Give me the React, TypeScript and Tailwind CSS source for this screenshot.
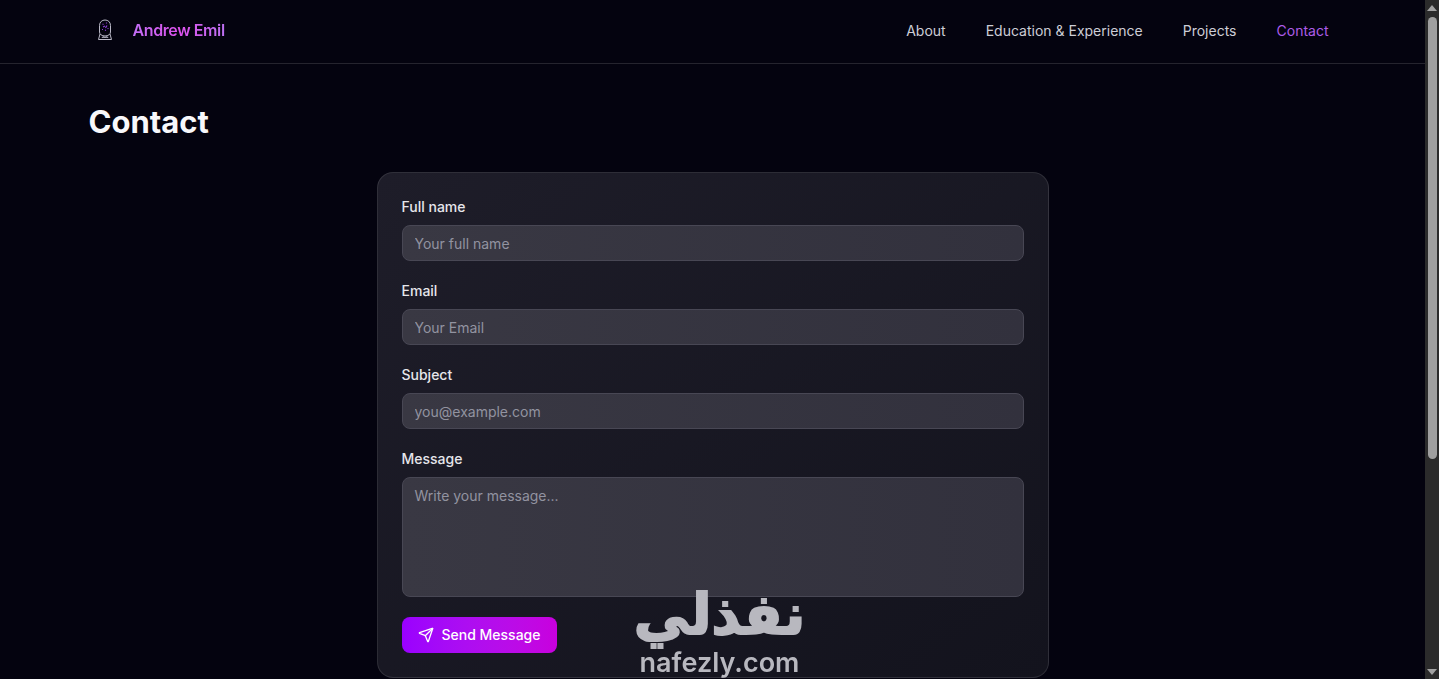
import type { ReactNode } from 'react';
import { Send } from 'lucide-react';

const NAV_LINKS = [
  { label: 'About', href: '#about' },
  { label: 'Education & Experience', href: '#education' },
  { label: 'Projects', href: '#projects' },
  { label: 'Contact', href: '#contact', active: true },
];

const FIELDS = [
  { id: 'name', label: 'Full name', type: 'text', placeholder: 'Your full name' },
  { id: 'email', label: 'Email', type: 'email', placeholder: 'Your Email' },
  { id: 'subject', label: 'Subject', type: 'text', placeholder: 'you@example.com' },
];

const inputStyles =
  'block w-full rounded-lg border border-[#484754] bg-linear-to-r from-[#393843] to-[#32313d] px-3 text-sm text-white placeholder:text-[#9293a0] outline-none focus:border-purple-500';

const LogoMark = () => (
  <svg viewBox="0 0 16 22" className="h-[22px] w-4" fill="none" stroke="#b9b8c6" strokeWidth="1" strokeLinejoin="round">
    <path d="M2.500 13V6.500C2.500 3 5 1 8 1s5.500 2 5.500 5.500V13c0 2.500-2.500 4-5.500 4s-5.500-1.500-5.500-4Z" />
    <path d="M3 15 1.500 20.500h13L13 15" />
    <path d="M5 18.500c1-1.500 2-1.500 3 0 1-1.500 2-1.500 3 0M5 18.500h6" strokeWidth=".8" />
    <path d="M5.500 5l1 .5M9.500 3.500v1M6 8l2-1M10 6.500 8.500 9M5 10.500h1M8 11l1 .5M10.500 9.500h1" stroke="#8b3fd6" strokeWidth="1.200" />
  </svg>
);

const Header = () => (
  <header className="border-b border-white/13">
    <div className="mx-auto flex h-[63px] max-w-7xl items-center justify-between px-4">
      <a href="#home" className="flex items-center gap-5 pl-2 pb-1">
        <LogoMark />
        <span className="bg-linear-to-r from-[#c26ef5] via-[#dc50ec] to-[#bd70f2] bg-clip-text text-base font-semibold tracking-tight text-transparent">
          Andrew Emil
        </span>
      </a>
      <nav className="flex gap-10 pr-2 pb-0.5">
        {NAV_LINKS.map((link) => (
          <a key={link.label} href={link.href} className={link.active ? 'text-sm text-[#ad5ce8]' : 'text-sm text-[#cdcdd6] hover:text-white'}>
            {link.label}
          </a>
        ))}
      </nav>
    </div>
  </header>
);

const Field = ({ id, label, children }: { id: string; label: string; children: ReactNode }) => (
  <div>
    <label htmlFor={id} className="mb-2 block text-sm font-medium text-[#e6e6ec]">
      {label}
    </label>
    {children}
  </div>
);

const ContactForm = () => (
  <form className="mx-auto w-full max-w-2xl space-y-5 rounded-2xl border border-white/10 bg-linear-to-br from-[#1e1d29] to-[#13131d] p-6">
    {FIELDS.map((field) => (
      <Field key={field.id} id={field.id} label={field.label}>
        <input id={field.id} type={field.type} placeholder={field.placeholder} className={`${inputStyles} h-9`} />
      </Field>
    ))}
    <Field id="message" label="Message">
      <textarea id="message" placeholder="Write your message..." className={`${inputStyles} h-[120px] resize-none py-2`} />
    </Field>
    <button type="button" className="flex h-9 items-center gap-2 rounded-lg bg-linear-to-r from-[#9a00ff] to-[#c800de] px-4 text-sm font-medium text-white">
      <Send size={16} strokeWidth={2} className="shrink-0" />
      Send Message
    </button>
  </form>
);

const Scrollbar = () => (
  <div className="sticky top-0 flex h-screen w-[14px] shrink-0 flex-col items-center bg-[#2b2b2b] py-1" aria-hidden="true">
    <svg viewBox="0 0 10 6" className="mt-px h-[6px] w-[10px]" fill="#a3a3a3">
      <path d="M5 0l5 6H0z" />
    </svg>
    <div className="my-[6px] w-full flex-1 pr-[2px] pl-[3px]">
      <div className="h-13/19 rounded-full bg-[#9f9f9f]" />
    </div>
    <svg viewBox="0 0 10 6" className="h-[6px] w-[10px]" fill="#a3a3a3">
      <path d="M0 0h10L5 6z" />
    </svg>
  </div>
);

const Watermark = () => (
  <div className="pointer-events-none fixed inset-x-0 bottom-0 flex flex-col items-center text-[#b8b8bf]">
    <span dir="rtl" lang="ar" className="font-['DejaVu_Sans',sans-serif] text-[56px] leading-[64px] font-bold [-webkit-text-stroke:2px_#b8b8bf]">
      نفذلي
    </span>
    <span className="font-['Inter',sans-serif] text-[27px] leading-8 font-semibold">nafezly.com</span>
  </div>
);

export default function App() {
  return (
    <div className="flex min-h-screen bg-[#04030f] font-['Inter',sans-serif]">
      <div className="min-w-0 flex-1">
        <Header />
        <main className="mx-auto max-w-7xl px-4 pt-[38px]">
          <h1 className="mb-[30px] text-[31px] leading-10 font-bold text-[#f8f8fb]">Contact</h1>
          <ContactForm />
        </main>
      </div>
      <Scrollbar />
      <Watermark />
    </div>
  );
}
